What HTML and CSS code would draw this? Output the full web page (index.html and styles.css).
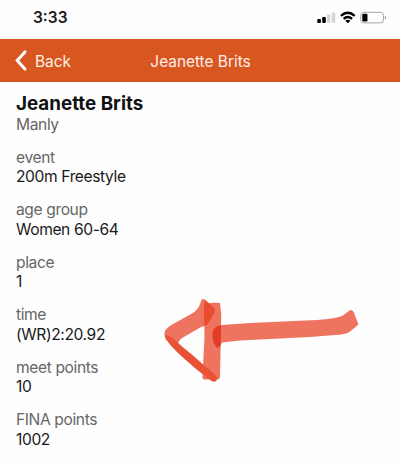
FILE: index.html
```
<!DOCTYPE html>
<html lang="en">
  <head>
    <meta charset="UTF-8" />
    <meta name="viewport" content="width=device-width, initial-scale=1.0" />
    <title>Jeanette Brits</title>
    <link rel="stylesheet" href="styles.css">
  </head>
  <body>
    <div class="status">
      <span class="clock">3:33</span>
      <svg class="status-icons" width="70" height="14" viewBox="0 0 70 14">
        <rect x="0.3" y="8" width="3.6" height="4" rx="0.8" />
        <rect x="5.2" y="6" width="3.6" height="6" rx="0.8" />
        <rect class="dim" x="10" y="3.6" width="3.4" height="8.4" rx="0.8" />
        <rect class="dim" x="14.8" y="1.4" width="3.4" height="10.6" rx="0.8" />
        <path class="wave" d="M23.9 4.9Q30.8 -1.3 37.7 4.9M26.6 7.9Q30.8 4.1 35 7.9" />
        <path d="M28.3 9.8Q30.8 7.9 33.3 9.8L30.8 12.3Z" />
        <rect class="shell" x="43.7" y="1.3" width="22.8" height="10.6" rx="3.2" />
        <rect x="45.3" y="2.7" width="5.2" height="7.8" rx="1.3" />
        <path class="tip" d="M67.8 4.8Q69.3 5.2 69.3 6.6Q69.3 8 67.8 8.4Z" />
      </svg>
    </div>
    <header class="navbar">
      <a class="back">
        <svg width="13" height="22" viewBox="0 0 13 22">
          <path d="M10.9 1.9L3.2 10.5L10.9 19.1" />
        </svg>
        Back
      </a>
      <span class="title">Jeanette Brits</span>
    </header>
    <main class="result">
      <h1>Jeanette Brits</h1>
      <p class="club">Manly</p>
      <dl>
        <div class="field">
          <dt>event</dt>
          <dd>200m Freestyle</dd>
        </div>
        <div class="field">
          <dt>age group</dt>
          <dd>Women 60-64</dd>
        </div>
        <div class="field">
          <dt>place</dt>
          <dd>1</dd>
        </div>
        <div class="field">
          <dt>time</dt>
          <dd>(WR)2:20.92</dd>
        </div>
        <div class="field">
          <dt>meet points</dt>
          <dd>10</dd>
        </div>
        <div class="field">
          <dt>FINA points</dt>
          <dd>1002</dd>
        </div>
      </dl>
    </main>
    <!-- hand drawn arrow over the time -->
    <svg class="arrow" width="200" height="90" viewBox="160 295 200 90">
      <path class="marker" d="M204 303.5Q212 302.5 220 303L221.3 315L220 377Q219.5 380 216 379.5L204 379.5Q202 379 202.5 376L204.5 337Z" />
      <path class="marker" d="M201.5 299.5Q203.5 298 206 300.5L214.5 308.5Q215.5 311 213 315L209 322Q207 325.5 201 327L183 337.5Q178.5 340 178.3 344L166 340Q163.5 335 165 331Q167 327 174 323.5L192 313.5Q198 310 200 304Z" />
      <path class="marker" d="M214.5 328.5Q217 325.5 222 325L250 323L317 320Q336 318.5 343 315.5L349.5 310.5Q352.5 309 354 313L358.5 324.5L349.5 332Q345 334.5 335 335L310 337L240 340.5L222 342.5L219.5 347Q217 349 215 345.5Q210 335 214.5 328.5Z" />
      <path class="edge" d="M165 335Q166 340 169.5 344Q175 350.5 184 358.5Q197 370.5 211 380.5Q214 383 216.5 380.5L217.5 378Q214 372.5 206 367L193 355.5L178.5 343.5Q170 334 165 335Z" />
      <path class="overlap" d="M204 303.5L204 299.5L206 300.5L214.5 308.5Q215.5 311 213 315L209 322Q207 325.5 204.5 325.5Z" />
      <path class="overlap dark" d="M214.5 328.5Q217 325.5 221 325.5L220.5 345L219 347.5Q217 348.5 215 345Q210 335 214.5 328.5Z" />
    </svg>
  </body>
</html>
```
FILE: styles.css
```
body {
  margin: 0;
  height: 463px;
  position: relative;
  overflow: hidden;
  background-color: #fefefe;
  font-family: "Inter", "Liberation Sans", sans-serif;
  font-size: 16px;
  color: #1a1a1a;
}
.status {
  display: flex;
  justify-content: space-between;
  box-sizing: border-box;
  height: 39px;
  padding: 8px 13px 0 33px;
}
.clock {
  font-size: 15.5px;
  font-weight: 600;
  line-height: 20px;
}
.status-icons {
  margin-top: 3px;
}
.dim {
  fill: #d4d4d4;
}
.wave {
  fill: none;
  stroke: black;
  stroke-width: 2.4;
}
.shell {
  fill: none;
  stroke: #a5a5a5;
  stroke-width: 1;
}
.tip {
  fill: #a5a5a5;
}
.navbar {
  display: grid;
  grid-template-columns: 1fr auto 1fr;
  align-items: center;
  box-sizing: border-box;
  height: 43px;
  padding: 1px 13px 0 14px;
  background-color: #d85721;
  color: #fdeee6;
  font-size: 15.4px;
}
.back {
  display: flex;
  align-items: center;
  gap: 8px;
}
.back path {
  fill: none;
  stroke: white;
  stroke-width: 3;
  stroke-linecap: round;
}
.result {
  padding: 11px 16px 0;
}
h1 {
  margin: 0;
  font-size: 18.8px;
  line-height: 22px;
  color: #111;
}
p,
dl,
dd {
  margin: 0;
}
.club,
.field {
  font-size: 15.6px;
  letter-spacing: -0.39px;
  line-height: 19.6px;
}
.field {
  margin-top: 13.3px;
}
.club,
dt {
  color: #666;
}
.arrow {
  position: absolute;
  left: 160px;
  top: 295px;
}
.marker {
  fill: #e9452b;
  fill-opacity: 0.75;
}
.edge {
  fill: #e95335;
}
.overlap {
  fill: #e84b2c;
  fill-opacity: 0.7;
}
.dark {
  fill: #dd3420;
}
```
